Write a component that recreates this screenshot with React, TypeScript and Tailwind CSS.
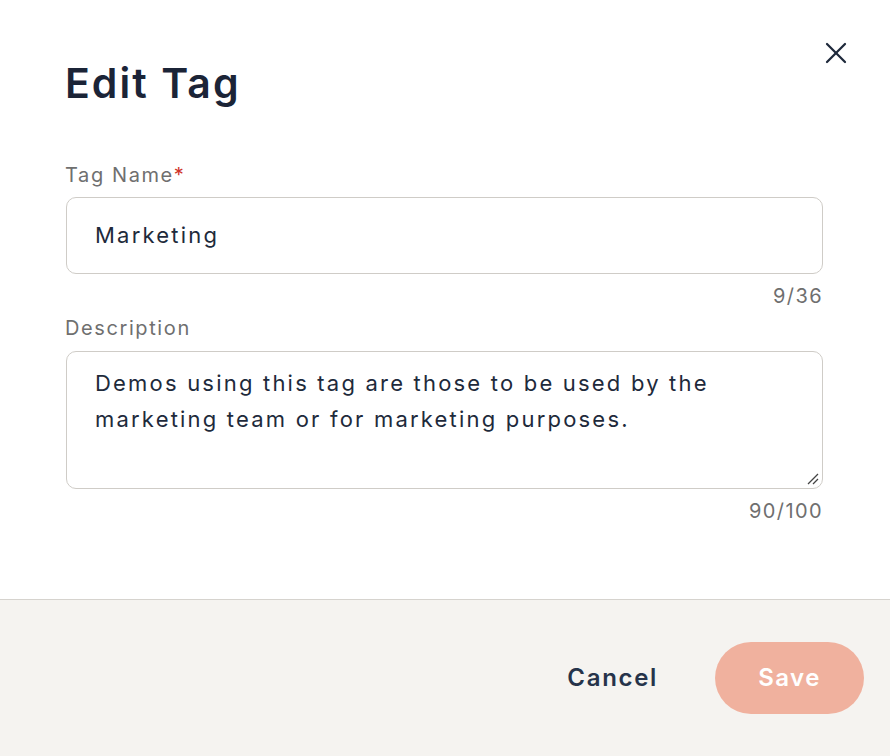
import { X } from 'lucide-react';

export default function App() {
  return (
    <div className="w-[890px] h-[756px] bg-white flex flex-col overflow-hidden" style={{ fontFamily: 'Inter, "Noto Sans", sans-serif' }}>
      <div className="flex-1 relative pl-[65px] pr-[67px] pt-[58px]">
        <button className="absolute right-[36px] top-[35px] text-[#1e293b]">
          <X size={36} strokeWidth={1.5} />
        </button>
        <h1 className="text-[41px] leading-[50px] font-semibold tracking-[0.05em] text-[#1b2437]">Edit Tag</h1>

        <div className="mt-[54px]">
          <label className="block text-[20px] leading-[26px] tracking-[0.08em] text-[#6f6f6f]">
            Tag Name<span className="text-[#d0332b]">*</span>
          </label>
          <div className="mt-[9px] ml-[1px] h-[77px] border border-[#cfccc7] rounded-[10px] flex items-center px-[28px]">
            <span className="text-[22px] tracking-[0.1em] text-[#1e2a3b]">Marketing</span>
          </div>
          <div className="text-right text-[20px] leading-[26px] tracking-[0.07em] text-[#6f6f6f] mt-[9px]">9/36</div>
        </div>

        <div className="mt-[6px]">
          <label className="block text-[20px] leading-[26px] tracking-[0.08em] text-[#6f6f6f]">Description</label>
          <div className="mt-[10px] ml-[1px] h-[138px] border border-[#cfccc7] rounded-[10px] relative px-[28px] pt-[13px]">
            <p className="text-[22px] leading-[36px] tracking-[0.1em] text-[#1e2a3b]">
              Demos using this tag are those to be used by the marketing team or for marketing purposes.
            </p>
            <svg className="absolute right-[2px] bottom-[2px]" width="14" height="14" viewBox="0 0 14 14">
              <path d="M2 12 L12 2 M7 12 L12 7" stroke="#444" strokeWidth="1.3" />
            </svg>
          </div>
          <div className="text-right text-[20px] leading-[26px] tracking-[0.07em] text-[#6f6f6f] mt-[9px]">90/100</div>
        </div>
      </div>

      <div className="h-[157px] border-t border-[#d6d3ce] bg-[#f5f3f0] flex items-center justify-end pr-[26px] gap-[57px]">
        <button className="text-[24px] font-semibold tracking-[0.07em] text-[#26334a]">Cancel</button>
        <button className="w-[149px] h-[72px] rounded-full bg-[#f0b19e] text-white text-[24px] font-semibold tracking-[0.06em]">Save</button>
      </div>
    </div>
  );
}
